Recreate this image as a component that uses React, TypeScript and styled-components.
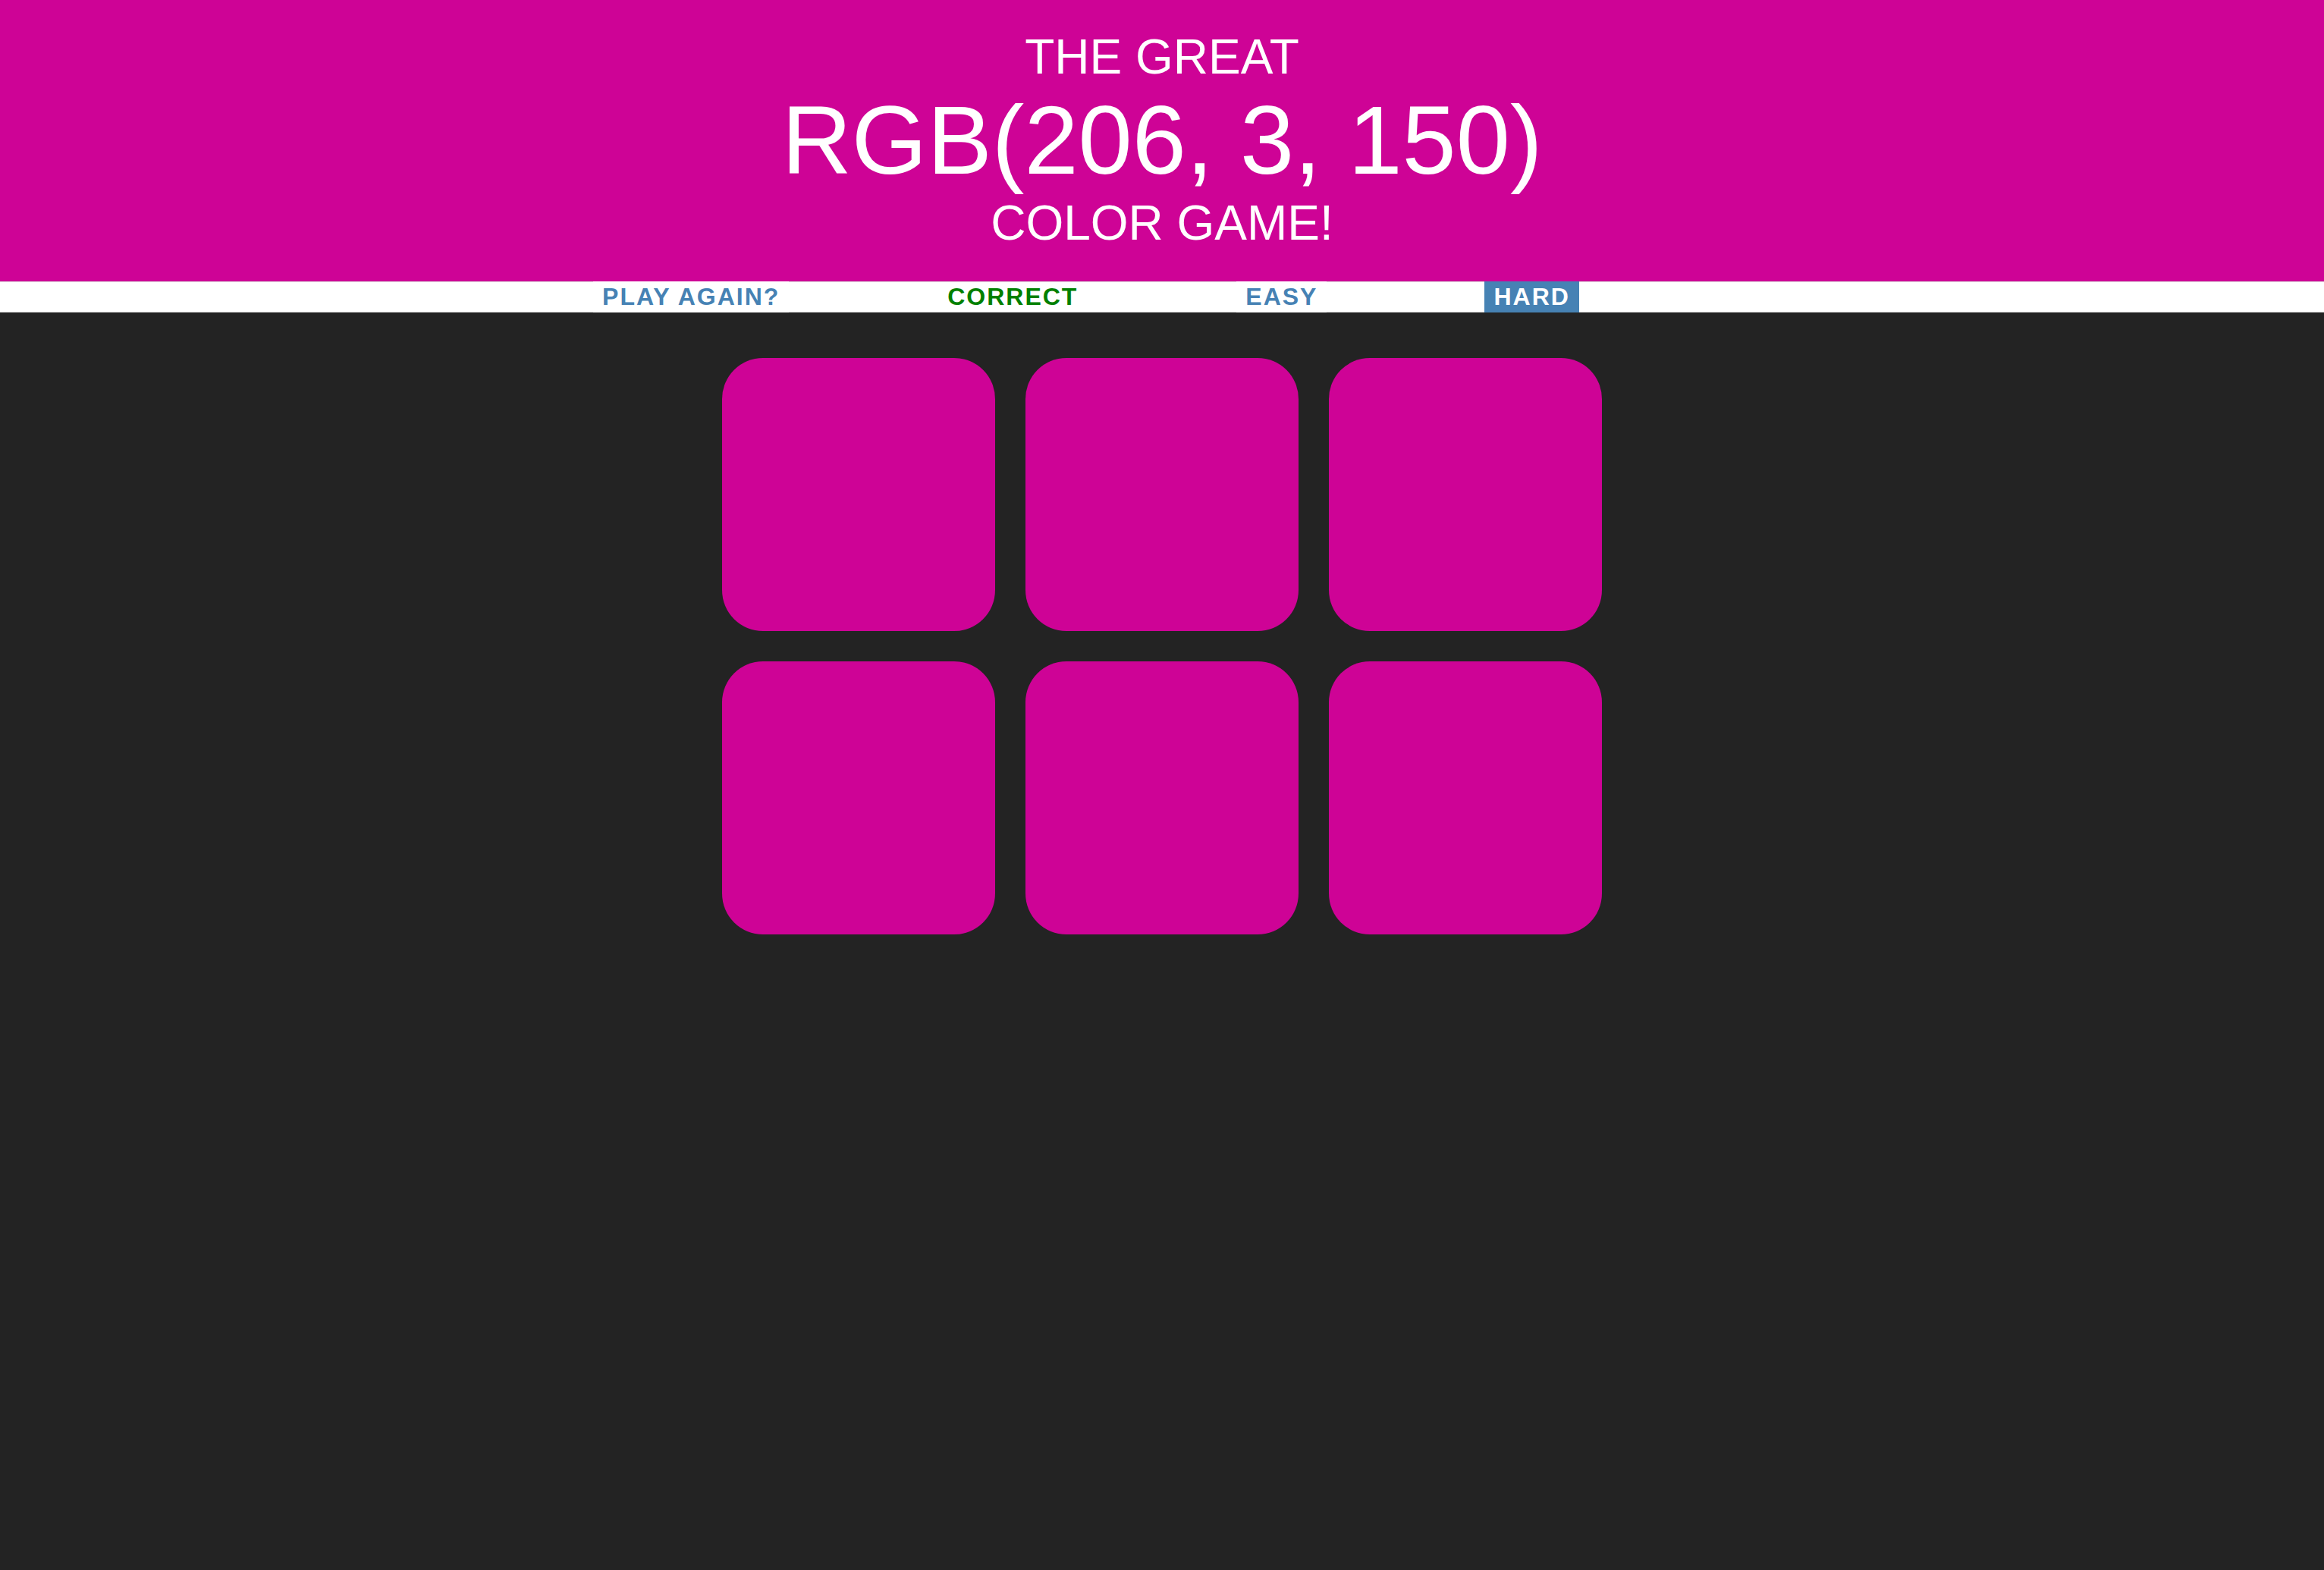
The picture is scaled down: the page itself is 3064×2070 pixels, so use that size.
import React from "react";
import styled, { createGlobalStyle } from "styled-components";

const GlobalStyle = createGlobalStyle`
  html, body {
    margin: 0;
    padding: 0;
    background: #232323;
    font-family: "Liberation Sans", Arial, sans-serif;
  }
  #root {
    min-height: 100vh;
    background: #232323;
  }
`;

const Page = styled.div`
  min-height: 100vh;
  background: #232323;
`;

const Title = styled.h1`
  margin: 0;
  padding: 39px 0 40px;
  background: rgb(206, 3, 150);
  color: #ffffff;
  text-align: center;
  text-transform: uppercase;
  font-weight: normal;
  font-size: 64px;
  line-height: 1.14;
`;

const TitleLine = styled.span<{ $big?: boolean }>`
  display: block;
  font-size: ${(p) => (p.$big ? "128px" : "64px")};
`;

const Stripe = styled.div`
  display: flex;
  justify-content: center;
  align-items: stretch;
  height: 41px;
  box-sizing: border-box;
  padding-right: 200px;
  background: #ffffff;
  border-top: 1px solid #dcdcdc;
  border-bottom: 1px solid #dcdcdc;
`;

const Button = styled.button<{ $selected?: boolean }>`
  margin: -1px 0;
  padding: 0 12px;
  border: none;
  outline: none;
  background: ${(p) => (p.$selected ? "steelblue" : "#ffffff")};
  color: ${(p) => (p.$selected ? "#ffffff" : "steelblue")};
  font-family: "Liberation Sans", Arial, sans-serif;
  font-size: 32px;
  font-weight: 700;
  letter-spacing: 2px;
  text-transform: uppercase;
  line-height: normal;
  cursor: pointer;
`;

const Message = styled.span`
  display: flex;
  align-items: center;
  justify-content: center;
  width: 590px;
  color: green;
  font-size: 32px;
  font-weight: 700;
  letter-spacing: 2px;
  text-transform: uppercase;
`;

const Spacer = styled.span<{ $w: number }>`
  width: ${(p) => p.$w}px;
  flex: none;
`;

const Board = styled.div`
  display: grid;
  grid-template-columns: repeat(3, 360px);
  gap: 40px;
  width: 1200px;
  box-sizing: border-box;
  padding: 20px;
  margin: 40px auto;
`;

const Square = styled.div<{ $color: string }>`
  width: 360px;
  height: 360px;
  border-radius: 15%;
  background: ${(p) => p.$color};
  cursor: pointer;
`;

const colors = Array.from({ length: 6 }, () => "rgb(206, 3, 150)");

export default function App() {
  return (
    <Page>
      <GlobalStyle />
      <Title>
        <TitleLine>The Great</TitleLine>
        <TitleLine $big>RGB(206, 3, 150)</TitleLine>
        <TitleLine>Color Game!</TitleLine>
      </Title>
      <Stripe>
        <Button>Play Again?</Button>
        <Message>Correct</Message>
        <Button>Easy</Button>
        <Spacer $w={208} />
        <Button $selected>Hard</Button>
      </Stripe>
      <Board>
        {colors.map((c, i) => (
          <Square key={i} $color={c} />
        ))}
      </Board>
    </Page>
  );
}
